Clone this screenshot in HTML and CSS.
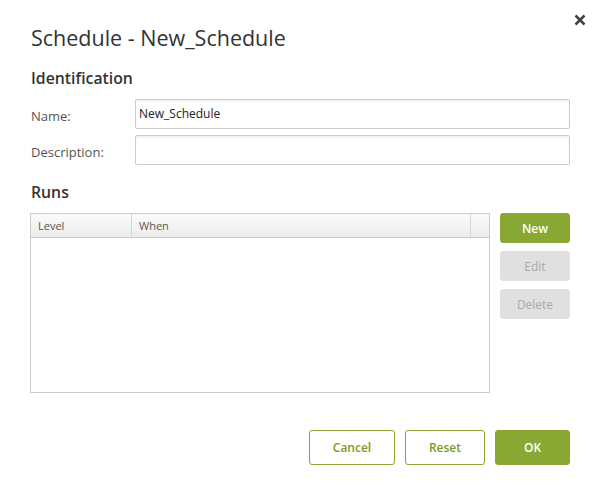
FILE: index.html
```html
<!DOCTYPE html>
<html>
<head>
<meta charset="utf-8">
<link rel="stylesheet" href="styles.css">
</head>
<body>
<div class="dialog">
  <button class="close" aria-label="Close">
    <svg width="12" height="12" viewBox="0 0 12 12"><path d="M1.5 1.5 L10.5 10.5 M10.5 1.5 L1.5 10.5" stroke="#444" stroke-width="2.6" stroke-linecap="butt"/></svg>
  </button>
  <h1 class="title">Schedule - New_Schedule</h1>
  <h2 class="section">Identification</h2>
  <div class="form">
    <div class="row">
      <label class="label">Name:</label>
      <div class="input">New_Schedule</div>
    </div>
    <div class="row">
      <label class="label">Description:</label>
      <div class="input"></div>
    </div>
  </div>
  <h2 class="section runs">Runs</h2>
  <div class="runs-area">
    <div class="grid">
      <div class="grid-head">
        <div class="col col-level">Level</div>
        <div class="col col-when">When</div>
        <div class="col col-scroll"></div>
      </div>
      <div class="grid-body"></div>
    </div>
    <div class="side-buttons">
      <button class="btn primary">New</button>
      <button class="btn disabled">Edit</button>
      <button class="btn disabled">Delete</button>
    </div>
  </div>
  <div class="footer">
    <button class="btn outline cancel">Cancel</button>
    <button class="btn outline reset">Reset</button>
    <button class="btn primary ok">OK</button>
  </div>
</div>
</body>
</html>
```

FILE: styles.css
```css
* { box-sizing: border-box; }
html, body {
  margin: 0;
  background: #fff;
  font-family: "Open Sans", "Noto Sans", sans-serif;
  color: #333;
}
.dialog {
  position: relative;
  width: 600px;
  height: 490px;
  padding: 23px 30px 0 31px;
}
.close {
  position: absolute;
  top: 14px;
  right: 14px;
  width: 12px;
  height: 12px;
  padding: 0;
  border: 0;
  background: none;
  display: flex;
}
.title {
  margin: 0;
  font-size: 21.5px;
  line-height: 30px;
  font-weight: 400;
  color: #333;
}
.section {
  margin: 14px 0 0;
  font-size: 15.8px;
  line-height: 22px;
  font-weight: 600;
  color: #333;
}
.form {
  margin-top: 10px;
  display: flex;
  flex-direction: column;
  gap: 6px;
}
.row {
  display: flex;
  align-items: center;
}
.label {
  width: 104px;
  font-size: 13px;
  color: #555;
  padding-top: 3px;
}
.input {
  flex: 1;
  height: 30px;
  border: 1px solid #ccc;
  border-radius: 2px;
  box-shadow: inset 0 2px 2px rgba(0,0,0,0.05);
  font-size: 12px;
  line-height: 28px;
  padding: 0 3px;
  color: #222;
}
.section.runs {
  margin-top: 16px;
}
.runs-area {
  margin-top: 10px;
  display: flex;
  gap: 10px;
  margin-left: -1px;
}
.grid {
  width: 460px;
  height: 180px;
  border: 1px solid #ccc;
  display: flex;
  flex-direction: column;
}
.grid-head {
  display: flex;
  height: 24px;
  border-bottom: 1px solid #ccc;
  background: linear-gradient(#fafafa, #ececec);
}
.col {
  font-size: 11px;
  line-height: 23px;
  color: #555;
  padding-left: 7px;
  border-right: 1px solid #d4d4d4;
}
.col-level { width: 101px; }
.col-when { flex: 1; }
.col-scroll { width: 18px; border-right: 0; padding: 0; }
.grid-body { flex: 1; }
.side-buttons {
  display: flex;
  flex-direction: column;
  gap: 8px;
}
.btn {
  font-family: "Open Sans", "Noto Sans", sans-serif;
  font-size: 12px;
  font-weight: 600;
  border-radius: 3px;
  border: 1px solid transparent;
  padding: 0;
  cursor: pointer;
}
.side-buttons .btn {
  width: 70px;
  height: 30px;
}
.primary {
  background: #89a833;
  color: #fff;
  border-color: #89a833;
}
.disabled {
  background: #e0e0e0;
  border-color: #e0e0e0;
  color: #aaa;
  font-weight: 400;
}
.footer {
  margin-top: 37px;
  display: flex;
  justify-content: flex-end;
  gap: 10px;
}
.footer .btn {
  height: 35px;
}
.outline {
  background: #fff;
  border-color: #89a833;
  color: #7a9a22;
}
.cancel { width: 86px; }
.reset { width: 80px; }
.ok { width: 75px; }
```
